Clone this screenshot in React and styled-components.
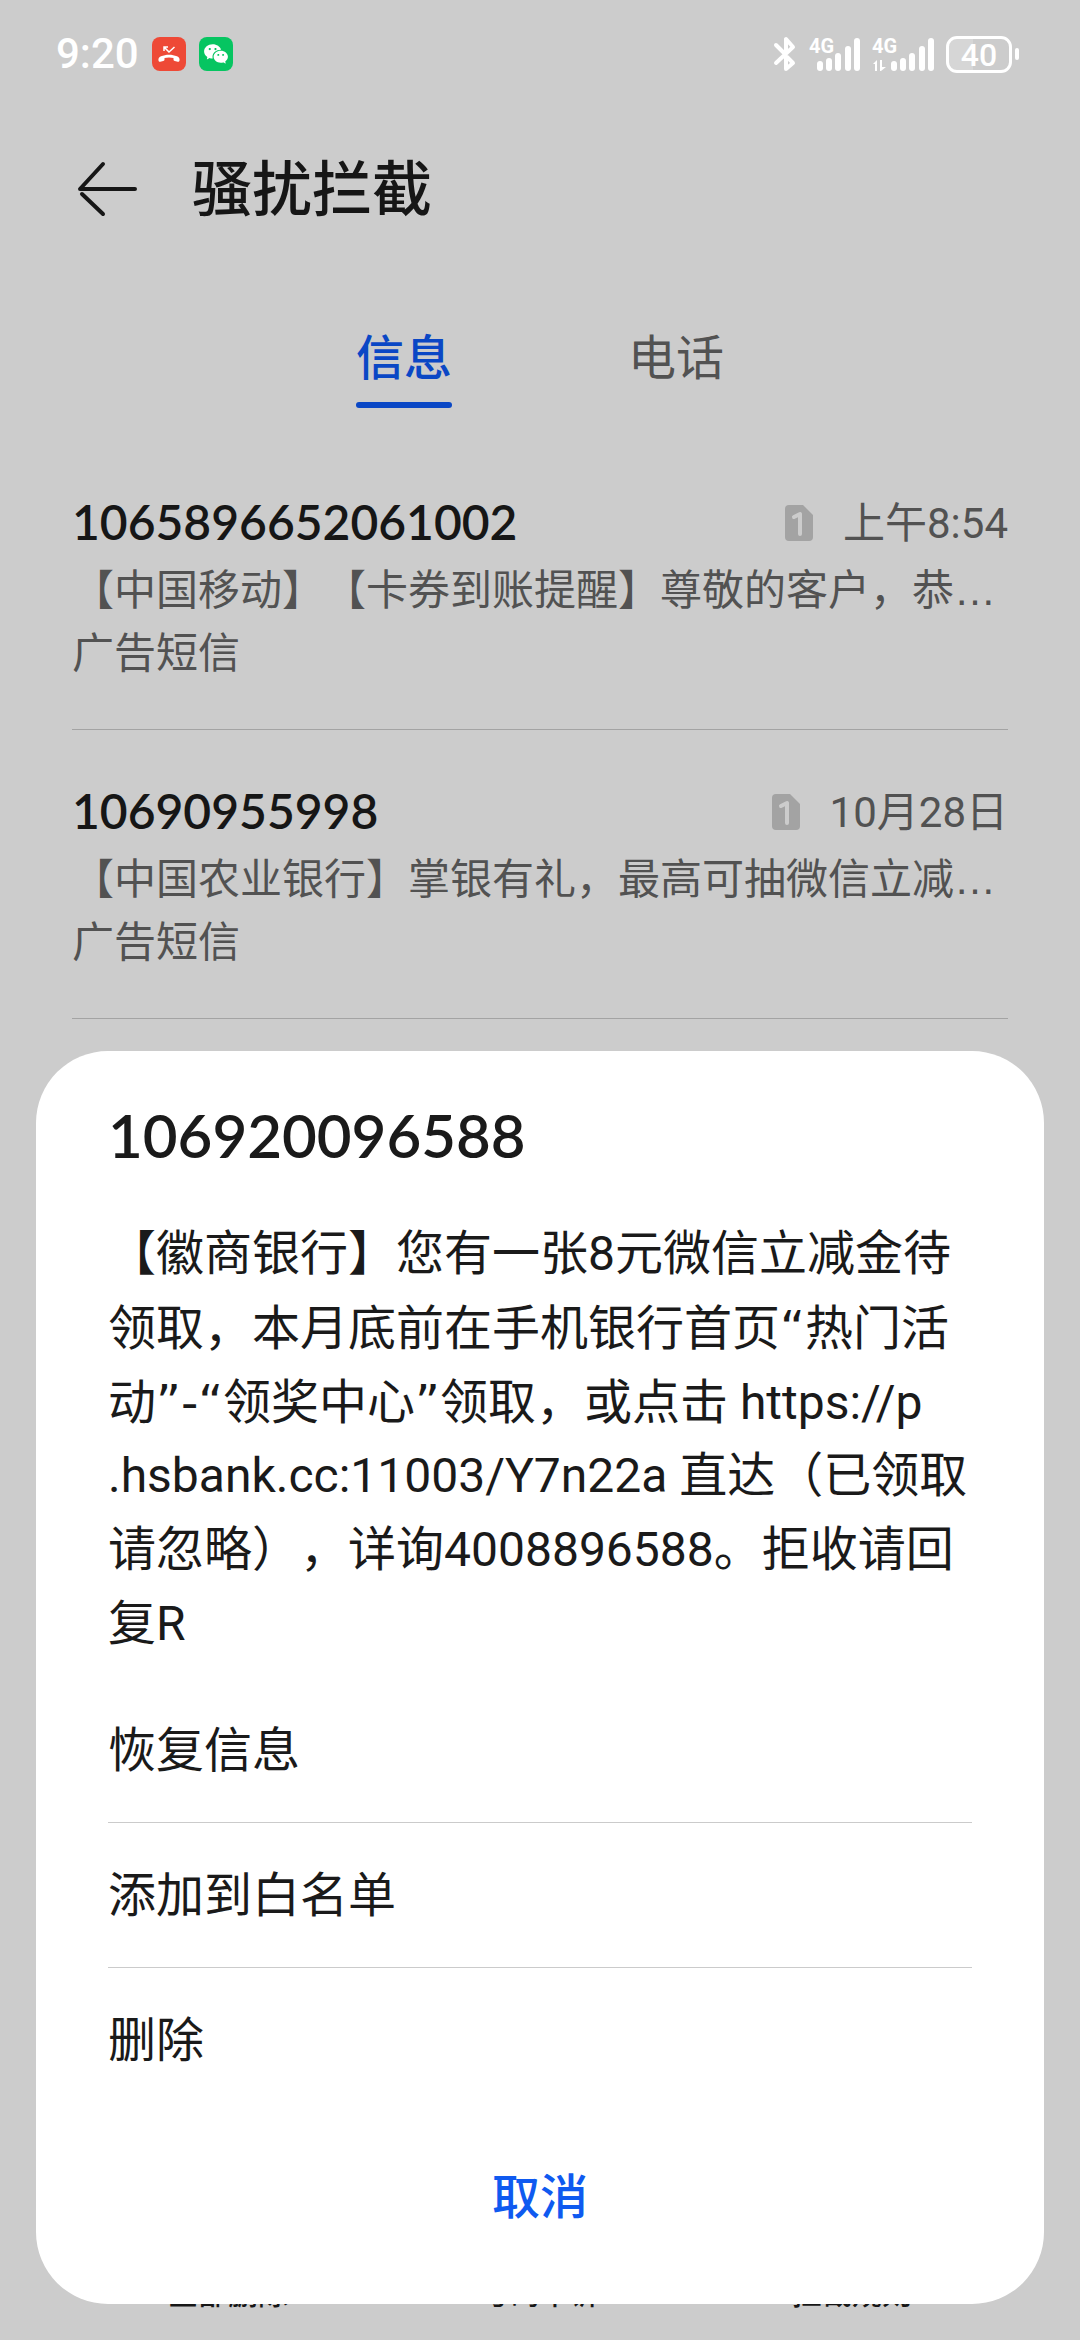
import React, { useState } from 'react';
import styled, { createGlobalStyle } from 'styled-components';
import { RiWechatFill } from 'react-icons/ri';

const colors = {
  page: '#cccccc',
  ink: '#161616',
  dialogInk: '#1a1a1a',
  muted: '#525252',
  badge: '#a3a3a3',
  line: '#a3a3a3',
  dialogLine: '#cbcbcb',
  tab: '#0a47c5',
  link: '#0f5af0',
};

const textFont = 'Roboto, "Noto Sans CJK SC", sans-serif';
const numberFont = 'Lato, "Noto Sans CJK SC", sans-serif';

const GlobalStyle = createGlobalStyle`
  * {
    box-sizing: border-box;
  }

  body {
    margin: 0;
    background: ${colors.page};
    color: ${colors.ink};
    font-family: ${textFont};
    text-spacing-trim: space-all;
  }

  button {
    margin: 0;
    padding: 0;
    border: 0;
    background: none;
    color: inherit;
    font: inherit;
    cursor: pointer;
  }

  svg {
    display: block;
    flex: none;
  }
`;

const Page = styled.div`
  display: flex;
  flex-direction: column;
  min-height: 100vh;
`;

const StatusBar = styled.div`
  display: flex;
  align-items: center;
  justify-content: space-between;
  height: 108px;
  padding: 0 61px 0 56px;
  color: white;
`;

const StatusGroup = styled.div`
  display: flex;
  align-items: center;
  gap: ${props => props.$gap}px;
`;

const Clock = styled.span`
  font-size: 42px;
  font-weight: 500;
  line-height: 48px;
`;

const AppBadge = styled.span`
  display: flex;
  align-items: center;
  justify-content: center;
  width: 34px;
  height: 34px;
  border-radius: 8px;
  background: ${props => props.$color};
  font-size: 26px;
`;

const Battery = styled.span`
  display: flex;
  align-items: center;
  gap: 3px;

  &::after {
    content: '';
    width: 4px;
    height: 12px;
    border-radius: 2px;
    background: white;
  }
`;

const BatteryLevel = styled.span`
  width: 66px;
  height: 37px;
  border: 3px solid white;
  border-radius: 11px;
  background: linear-gradient(90deg, #d6d6d6 40%, transparent 40%);
  font-size: 32px;
  font-weight: 500;
  line-height: 32px;
  text-align: center;
`;

const Header = styled.header`
  display: flex;
  align-items: center;
  gap: 54px;
  height: 162px;
  padding: 0 72px;
`;

const BackButton = styled.button`
  padding-left: 4px;
`;

const Title = styled.h1`
  margin: 0;
  padding-top: 4px;
  font-size: 60px;
  font-weight: 500;
  line-height: 80px;
`;

const Tabs = styled.nav`
  display: flex;
  justify-content: center;
  height: 171px;
  padding-top: 54px;
`;

const TabSlot = styled.div`
  display: flex;
  justify-content: center;
  width: 272px;
`;

const Tab = styled.button`
  display: flex;
  flex-direction: column;
  gap: 8px;
  height: 84px;
  color: ${props => (props.$active ? colors.tab : colors.muted)};
  font-size: 48px;
  font-weight: ${props => (props.$active ? 500 : 400)};
  line-height: 70px;

  &::after {
    content: '';
    width: 100%;
    height: 6px;
    border-radius: 3px;
    background: ${props => (props.$active ? colors.tab : 'transparent')};
  }
`;

const MessageList = styled.ul`
  flex: 1;
  margin: 0;
  padding: 0 72px;
  list-style: none;
`;

const MessageItem = styled.li`
  padding: 50px 0 44px;
  border-bottom: 1px solid ${colors.line};
  color: ${colors.muted};
  font-size: 42px;
  line-height: 63px;
`;

const MessageTop = styled.div`
  display: flex;
  align-items: center;
  justify-content: space-between;
  height: 68px;
  padding-bottom: 4px;
`;

const Sender = styled.span`
  padding-bottom: 4px;
  color: ${colors.ink};
  font-family: ${numberFont};
  font-size: 48px;
  font-weight: 600;
`;

const Received = styled.span`
  display: flex;
  align-items: center;
  gap: 30px;
`;

const Line = styled.div`
  overflow: hidden;
  line-height: 63px;
  white-space: nowrap;
`;

const Ellipsis = styled.span`
  font-family: "Liberation Sans", sans-serif;
`;

const BottomBar = styled.footer`
  display: grid;
  grid-template-columns: repeat(3, 1fr);
  padding: 0 72px 28px;
  font-size: 30px;
  font-weight: 500;
  line-height: 36px;
`;

const Overlay = styled.div`
  position: fixed;
  inset: 0;
  display: flex;
  align-items: flex-end;
  padding: 36px;
`;

const Dialog = styled.section`
  flex: 1;
  padding: 44px 72px 48px;
  border-radius: 72px;
  background: white;
  color: ${colors.dialogInk};
  font-size: 48px;
`;

const DialogTitle = styled.h2`
  margin: 0 0 42px;
  font-family: ${numberFont};
  font-size: 60px;
  font-weight: 600;
  line-height: 80px;
`;

const Body = styled.p`
  margin: 0 0 17px;
  line-height: 74px;
`;

const BodyLine = styled.span`
  display: block;
  height: 74px;
  white-space: pre;
`;

const Quote = styled.span`
  font-family: "DejaVu Sans", sans-serif;
`;

const Option = styled.button`
  display: block;
  width: 100%;
  padding-top: 2px;
  line-height: 142px;
  text-align: left;

  & + & {
    border-top: 1px solid ${colors.dialogLine};
  }
`;

const Cancel = styled.button`
  display: block;
  width: 100%;
  height: 120px;
  margin-top: 24px;
  padding-bottom: 6px;
  color: ${colors.link};
  font-weight: 500;
`;

const messages = [
  {
    sender: '1065896652061002',
    time: '上午8:54',
    preview: '【中国移动】【卡券到账提醒】尊敬的客户，恭',
    kind: '广告短信',
  },
  {
    sender: '10690955998',
    time: '10月28日',
    preview: '【中国农业银行】掌银有礼，最高可抽微信立减',
    kind: '广告短信',
  },
];

const selected = {
  sender: '106920096588',
  lines: [
    '【徽商银行】您有一张8元微信立减金待',
    '领取，本月底前在手机银行首页“热门活',
    '动”-“领奖中心”领取，或点击 https://p',
    '.hsbank.cc:11003/Y7n22a 直达（已领取',
    '请忽略），详询4008896588。拒收请回',
    '复R',
  ],
};

// quotes and the hyphen come from a font with wider punctuation
const withQuotes = line => line.split(/([“”-]+)/).map((part, i) => (
  i % 2 ? <Quote key={i}>{part}</Quote> : part
));

const MissedCallIcon = () => (
  <svg width="34" height="34" viewBox="0 0 34 34" fill="none">
    <path d="M12 14V10h4M12.5 10.5l4.500 4.500 5.500-5" stroke="white" strokeWidth="1.500" />
    <path
      d="M6.500 23.500c-.4-2 .4-3.400 2.500-4.300 5-2.100 11-2.100 16 0 2.100.9 2.900 2.300 2.500 4.300-.2 1-.8 1.400-1.800 1.200l-2.900-.6c-.9-.2-1.300-.7-1.300-1.500v-1.500c-3-.9-6-.9-9 0v1.500c0 .8-.4 1.300-1.300 1.500l-2.900.6c-1 .2-1.600-.2-1.800-1.200z"
      fill="white"
    />
  </svg>
);

const BluetoothIcon = () => (
  <svg width="24" height="36" viewBox="0 0 24 36" fill="none" stroke="white" strokeWidth="4" strokeLinecap="round" strokeLinejoin="round">
    <path d="M3 9l9 9M3 27L20 11 13 3v12M13 22v11l7-6-6-6" />
  </svg>
);

const bars = [
  { x: 8, top: 25 },
  { x: 17, top: 22 },
  { x: 26, top: 17 },
  { x: 36, top: 10 },
  { x: 45, top: 2 },
];

const SignalIcon = ({ shift, data }) => (
  <svg width={51 + shift} height="48" viewBox={`0 -6 ${51 + shift} 48`} fill="white">
    <text x="0" y="17" fontFamily="Roboto, sans-serif" fontSize="20" fontWeight="700">4G</text>
    {data && <path d="M1 28l4-4v11H3v-7zM8 24h2v7h4l-5 4H8z" />}
    {bars.map(bar => (
      <rect key={bar.x} x={bar.x + shift} y={bar.top} width="6" height={36 - bar.top - 1} rx="3" />
    ))}
  </svg>
);

const BackIcon = () => (
  <svg width="62" height="56" viewBox="0 0 62 56" fill="none" stroke={colors.ink} strokeLinecap="round" strokeWidth="4">
    <path d="M59 28H4L27 3" strokeLinejoin="round" />
    <path d="M27 53L6 33" />
  </svg>
);

const SimBadge = () => (
  <svg width="28" height="36" viewBox="0 0 28 36">
    <path d="M4 0h14l10 10v22a4 4 0 0 1-4 4H4a4 4 0 0 1-4-4V4a4 4 0 0 1 4-4z" fill={colors.badge} />
    <path d="M9 12l6-3v20" fill="none" stroke={colors.page} strokeWidth="4" strokeLinecap="round" strokeLinejoin="round" />
  </svg>
);

const App = () => {
  const [tab, setTab] = useState('信息');
  const [open, setOpen] = useState(true);
  const close = () => setOpen(false);

  return (
    <>
      <GlobalStyle />
      <Page>
        <StatusBar>
          <StatusGroup $gap={13}>
            <Clock>9:20</Clock>
            <AppBadge $color="#ee4936"><MissedCallIcon /></AppBadge>
            <AppBadge $color="#06c561"><RiWechatFill /></AppBadge>
          </StatusGroup>
          <StatusGroup $gap={12}>
            <BluetoothIcon />
            <SignalIcon shift={0} />
            <SignalIcon shift={11} data />
            <Battery><BatteryLevel>40</BatteryLevel></Battery>
          </StatusGroup>
        </StatusBar>

        <Header>
          <BackButton aria-label="返回"><BackIcon /></BackButton>
          <Title>骚扰拦截</Title>
        </Header>

        <Tabs>
          {['信息', '电话'].map(name => (
            <TabSlot key={name}>
              <Tab $active={tab === name} onClick={() => setTab(name)}>{name}</Tab>
            </TabSlot>
          ))}
        </Tabs>

        <MessageList>
          {messages.map(message => (
            <MessageItem key={message.sender}>
              <MessageTop>
                <Sender>{message.sender}</Sender>
                <Received>
                  <SimBadge />
                  <time>{message.time}</time>
                </Received>
              </MessageTop>
              <Line>{message.preview}<Ellipsis>…</Ellipsis></Line>
              <Line>{message.kind}</Line>
            </MessageItem>
          ))}
        </MessageList>

        <BottomBar>
          <button>全部删除</button>
          <button>号码申诉</button>
          <button>拦截规则</button>
        </BottomBar>
      </Page>

      {open && (
        <Overlay>
          <Dialog role="dialog" aria-labelledby="dialog-title">
            <DialogTitle id="dialog-title">{selected.sender}</DialogTitle>
            <Body>
              {selected.lines.map(line => (
                <BodyLine key={line}>{withQuotes(line)}</BodyLine>
              ))}
            </Body>
            <Option onClick={close}>恢复信息</Option>
            <Option onClick={close}>添加到白名单</Option>
            <Option onClick={close}>删除</Option>
            <Cancel onClick={close}>取消</Cancel>
          </Dialog>
        </Overlay>
      )}
    </>
  );
};

export default App;
